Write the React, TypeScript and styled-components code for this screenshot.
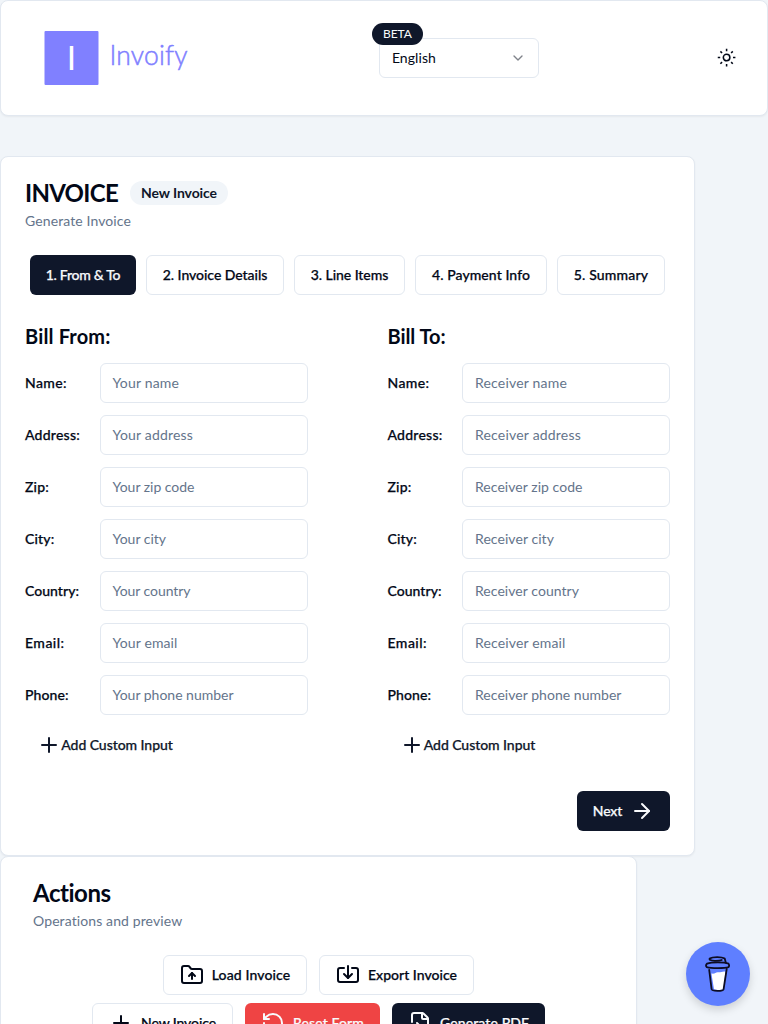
import React, { useLayoutEffect, useRef, useState } from "react";
import styled, { createGlobalStyle, css } from "styled-components";
import { ArrowRight, ChevronDown, FileInput, FolderUp, Import, Plus, RotateCcw } from "lucide-react";

const ink = "#020817";
const navy = "#0f172a";
const line = "#e2e8f0";
const muted = "#64748b";

const GlobalStyle = createGlobalStyle`
  *, *::before, *::after { box-sizing: border-box; }
  html, body { margin: 0; background: #f1f5f9; }
  body { color: ${ink}; font: 400 14px/20px Lato, sans-serif; }
  button, input { font: inherit; color: inherit; }
  h1, h2, h3, p { margin: 0; }
`;

const Page = styled.div`
  display: flex;
  flex-direction: column;
  align-items: flex-start;
  height: 100vh;
  overflow: hidden;
`;

const cardStyle = css`
  flex: none;
  background: #fff;
  border: 1px solid ${line};
  border-radius: 8px;
  box-shadow: 0 1px 2px rgba(0, 0, 0, 0.05);
`;

const mediumText = css`
  font-weight: 500;
  -webkit-text-stroke: 0.25px currentColor;
`;

const Header = styled.header`
  ${cardStyle}
  display: flex;
  align-items: center;
  justify-content: space-between;
  width: 100%;
  height: 116px;
  margin-bottom: 40px;
  padding: 0 31px 0 43px;
`;

const Logo = styled.svg`
  display: block;
  width: 160px;
  height: 56px;
`;

const LanguageArea = styled.div`
  position: relative;
  margin-right: 20px;
  margin-left: 17px;
`;

const LanguageSelect = styled.button`
  display: flex;
  align-items: center;
  justify-content: space-between;
  width: 160px;
  height: 40px;
  padding: 0 12px;
  background: #fff;
  border: 1px solid ${line};
  border-radius: 6px;
  svg { opacity: 0.5; }
`;

const Beta = styled.span`
  position: absolute;
  top: -15px;
  left: -7px;
  display: flex;
  align-items: center;
  justify-content: center;
  width: 51px;
  height: 22px;
  border-radius: 11px;
  background: ${navy};
  color: #f8fafc;
  font-size: 12px;
`;

const ThemeIcon = styled.svg`
  width: 19.2px;
  height: 19.2px;
  stroke: ${ink};
  fill: none;
`;

const InvoiceCard = styled.main`
  ${cardStyle}
  width: 695px;
  height: 700px;
  padding: 24px;
`;

const TitleRow = styled.div`
  display: flex;
  align-items: center;
  gap: 12px;
  height: 24px;
`;

const Title = styled.h1`
  font-size: 24px;
  line-height: 24px;
  font-weight: 700;
`;

const Tag = styled.span`
  display: flex;
  align-items: center;
  justify-content: center;
  width: 98px;
  height: 24px;
  border-radius: 12px;
  background: #f1f5f9;
  color: ${navy};
  font-weight: 700;
`;

const Subtitle = styled.p`
  margin-top: 6px;
  color: ${muted};
`;

const Steps = styled.nav`
  display: flex;
  gap: 10px;
  margin-top: 24px;
  padding-left: 5px;
`;

type ButtonKind = "dark" | "outline" | "danger" | "ghost";

const fills: Record<ButtonKind, string> = { dark: navy, outline: "#fff", danger: "#ef4444", ghost: "#fff" };

const Button = styled.button<{ $kind: ButtonKind; $width: number; $gap?: number }>`
  ${mediumText}
  display: flex;
  align-items: center;
  justify-content: center;
  gap: ${(p) => p.$gap ?? 8}px;
  flex: none;
  width: ${(p) => p.$width}px;
  height: 40px;
  padding: 0;
  border: ${(p) => (p.$kind === "outline" ? `1px solid ${line}` : "0")};
  border-radius: 6px;
  background: ${(p) => fills[p.$kind]};
  color: ${(p) => (p.$kind === "outline" ? ink : p.$kind === "ghost" ? navy : "#f8fafc")};
`;

const Parties = styled.div`
  display: flex;
  justify-content: space-between;
  margin-top: 27px;
`;

const Party = styled.section`
  width: 282.5px;
`;

const PartyTitle = styled.h2`
  margin-bottom: 13px;
  font-size: 20px;
  line-height: 28px;
  font-weight: 700;
`;

const Fields = styled.div`
  display: flex;
  flex-direction: column;
  gap: 12px;
`;

const Field = styled.label`
  ${mediumText}
  display: flex;
  justify-content: space-between;
  align-items: center;
  height: 40px;
`;

const InputBox = styled.span`
  display: flex;
  align-items: center;
  width: 208px;
  height: 40px;
  padding: 0 12px;
  border: 1px solid ${line};
  border-radius: 6px;
  color: ${muted};
  font-weight: 400;
  -webkit-text-stroke: 0;
`;

const AddRow = styled.div`
  margin-top: 10px;
`;

const NextRow = styled.div`
  display: flex;
  justify-content: flex-end;
  margin-top: 26px;
`;

const ActionsCard = styled.section`
  ${cardStyle}
  width: 637px;
  height: 320px;
  padding: 24px 0 0;
`;

const ActionsHead = styled.div`
  padding-left: 32px;
  margin-bottom: 24px;
`;

const ActionRow = styled.div`
  display: flex;
  justify-content: center;
  gap: 12px;
  margin-bottom: 8px;
`;

const CoffeeButton = styled.button`
  position: fixed;
  right: 18px;
  bottom: 18px;
  display: grid;
  place-items: center;
  width: 64px;
  height: 64px;
  padding: 0;
  border: 0;
  border-radius: 50%;
  background: #5f7fff;
  box-shadow: 0 4px 8px rgba(0, 0, 0, 0.15);
`;

const Run = styled.span`
  display: inline-block;
  flex: none;
  white-space: nowrap;
`;

/* Tracks a short run of text so that it spans the given width. */
function Text({ w, children }: { w: number; children: string }) {
  const ref = useRef<HTMLSpanElement>(null);
  const [tracking, setTracking] = useState(0);
  useLayoutEffect(() => {
    if (ref.current) {
      const natural = ref.current.getBoundingClientRect().width;
      setTracking((w - natural) / children.length);
    }
  }, [w, children]);
  return (
    <Run ref={ref} style={{ letterSpacing: tracking }}>
      {children}
    </Run>
  );
}

type Item = [string, number];

const steps: [string, number, number][] = [
  ["1. From & To", 74.5, 106],
  ["2. Invoice Details", 104.5, 138],
  ["3. Line Items", 77.5, 111],
  ["4. Payment Info", 98, 132],
  ["5. Summary", 74.5, 108],
];

const labels: Item[] = [
  ["Name:", 42],
  ["Address:", 55],
  ["Zip:", 24],
  ["City:", 29.5],
  ["Country:", 54],
  ["Email:", 39.5],
  ["Phone:", 43.5],
];

const senderHints: Item[] = [
  ["Your name", 66.5],
  ["Your address", 80.5],
  ["Your zip code", 82],
  ["Your city", 53.5],
  ["Your country", 78],
  ["Your email", 65],
  ["Your phone number", 121],
];

const receiverHints: Item[] = [
  ["Receiver name", 92],
  ["Receiver address", 106],
  ["Receiver zip code", 107.5],
  ["Receiver city", 79],
  ["Receiver country", 104],
  ["Receiver email", 90.5],
  ["Receiver phone number", 146.5],
];

function PartyForm({ title, hints }: { title: Item; hints: Item[] }) {
  return (
    <Party>
      <PartyTitle><Text w={title[1]}>{title[0]}</Text></PartyTitle>
      <Fields>
        {labels.map(([label, width], i) => (
          <Field key={label}>
            <Text w={width}>{label}</Text>
            <InputBox><Text w={hints[i][1]}>{hints[i][0]}</Text></InputBox>
          </Field>
        ))}
      </Fields>
      <AddRow>
        <Button $kind="ghost" $width={160} $gap={0}>
          <Plus size={24} />
          <Text w={111.5}>Add Custom Input</Text>
        </Button>
      </AddRow>
    </Party>
  );
}

export default function App() {
  return (
    <Page>
      <GlobalStyle />
      <Header>
        <Logo viewBox="0 0 160 56">
          <rect x="0.5" y="1" width="54" height="54" rx="1" fill="#8080ff" />
          <text x="27.5" y="40" textAnchor="middle" fontSize="33.5" fill="#fff">I</text>
          <text x="65.5" y="35" fontSize="26.500" fontWeight="300" textLength="78" fill="#8080ff" stroke="#8080ff" strokeWidth="0.5">Invoify</text>
        </Logo>
        <LanguageArea>
          <LanguageSelect>
            <Text w={44}>English</Text>
            <ChevronDown size={16} />
          </LanguageSelect>
          <Beta><Text w={29}>BETA</Text></Beta>
        </LanguageArea>
        <ThemeIcon viewBox="0 0 15 15" strokeWidth="1.2">
          <circle cx="7.5" cy="7.5" r="2.550" />
          <path d="M7.5 .6v1.900M7.5 12.500v1.900M.6 7.5h1.900M12.500 7.5h1.900M2.650 2.650l1.300 1.300M11.050 11.050l1.300 1.300M2.650 12.350l1.300-1.300M11.050 3.950l1.300-1.300" />
        </ThemeIcon>
      </Header>

      <InvoiceCard>
        <TitleRow>
          <Title><Text w={93}>INVOICE</Text></Title>
          <Tag><Text w={76}>New Invoice</Text></Tag>
        </TitleRow>
        <Subtitle><Text w={106}>Generate Invoice</Text></Subtitle>
        <Steps>
          {steps.map(([label, textWidth, width], i) => (
            <Button key={label} $kind={i === 0 ? "dark" : "outline"} $width={width}>
              <Text w={textWidth}>{label}</Text>
            </Button>
          ))}
        </Steps>
        <Parties>
          <PartyForm title={["Bill From:", 85.5]} hints={senderHints} />
          <PartyForm title={["Bill To:", 58]} hints={receiverHints} />
        </Parties>
        <NextRow>
          <Button $kind="dark" $width={93}>
            <Text w={29.5}>Next</Text>
            <ArrowRight size={24} />
          </Button>
        </NextRow>
      </InvoiceCard>

      <ActionsCard>
        <ActionsHead>
          <Title as="h2"><Text w={78}>Actions</Text></Title>
          <Subtitle><Text w={149.5}>Operations and preview</Text></Subtitle>
        </ActionsHead>
        <ActionRow>
          <Button $kind="outline" $width={144}><FolderUp size={24} /><Text w={78.5}>Load Invoice</Text></Button>
          <Button $kind="outline" $width={155}><Import size={24} /><Text w={89}>Export Invoice</Text></Button>
        </ActionRow>
        <ActionRow>
          <Button $kind="outline" $width={141}><Plus size={24} /><Text w={75}>New Invoice</Text></Button>
          <Button $kind="danger" $width={135}><RotateCcw size={24} /><Text w={71}>Reset Form</Text></Button>
          <Button $kind="dark" $width={153}><FileInput size={24} /><Text w={89}>Generate PDF</Text></Button>
        </ActionRow>
      </ActionsCard>

      <CoffeeButton aria-label="Buy me a coffee">
        <svg width="28" height="40" viewBox="0 0 28 40" fill="none" stroke="#0d0c22" strokeWidth="1.8" strokeLinecap="round" strokeLinejoin="round">
          <path d="M7.4 19.500c4 .8 4-1.800 7-1.300 2 .3 4-1.200 7-.7L19.700 35.300c-2 1-7.500 1-9.700 0z" fill="#fff" stroke="none" />
          <path d="M5.200 16 7.600 35.200c.4 2.200 11.400 2.200 12 0L22.700 15" />
          <path d="M3 9.600c5-1.700 17-1.700 21.500 0 .8 1.300.7 2.700 0 3.600-4 1.300-17.500 1.300-21.700 0-1-1-.7-2.600.2-3.600z" />
          <path d="M21.800 8.500 20.700 4.500c-3-1.900-12-1.900-15 0 -.8 1.200 1 2.200 5 2.300 3.500.1 5.500-.2 7-.8" />
        </svg>
      </CoffeeButton>
    </Page>
  );
}
